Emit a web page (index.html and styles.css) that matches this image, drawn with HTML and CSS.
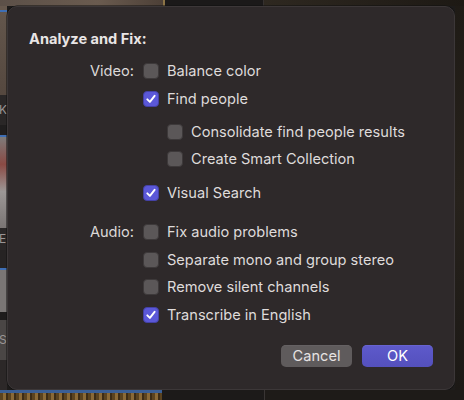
FILE: index.html
```html
<!DOCTYPE html>
<html>
<head>
<meta charset="utf-8">
<link rel="stylesheet" href="styles.css">
</head>
<body>
<div class="screen">
  <div class="top-strip">
    <div class="ts-image"></div>
    <div class="ts-gold"></div>
    <div class="ts-dark"></div>
    <div class="ts-line"></div>
    <div class="ts-brown"></div>
  </div>
  <div class="left-strip">
    <div class="ls a"></div>
    <div class="ls blue"></div>
    <div class="ls b"></div>
    <div class="ls bar"><span>K</span></div>
    <div class="ls c"></div>
    <div class="ls blue"></div>
    <div class="ls d"></div>
    <div class="ls bar2"><span>E</span></div>
    <div class="ls e"></div>
    <div class="ls blue"></div>
    <div class="ls f"></div>
    <div class="ls g"></div>
    <div class="ls h"><span>S</span></div>
    <div class="ls i"></div>
  </div>
  <div class="dialog">
    <div class="title">Analyze and Fix:</div>
    <div class="row r-video">
      <span class="label">Video:</span>
      <span class="box"></span><span class="text">Balance color</span>
    </div>
    <div class="row r-find">
      <span class="label"></span>
      <span class="box on"><svg viewBox="0 0 16 16"><path d="M4.3 8.3 L6.9 10.9 L11.6 4.8"/></svg></span><span class="text">Find people</span>
    </div>
    <div class="row r-cons">
      <span class="label"></span>
      <span class="indent"></span>
      <span class="box"></span><span class="text">Consolidate find people results</span>
    </div>
    <div class="row r-smart">
      <span class="label"></span>
      <span class="indent"></span>
      <span class="box"></span><span class="text">Create Smart Collection</span>
    </div>
    <div class="row r-visual">
      <span class="label"></span>
      <span class="box on"><svg viewBox="0 0 16 16"><path d="M4.3 8.3 L6.9 10.9 L11.6 4.8"/></svg></span><span class="text">Visual Search</span>
    </div>
    <div class="row r-audio">
      <span class="label">Audio:</span>
      <span class="box"></span><span class="text">Fix audio problems</span>
    </div>
    <div class="row r-sep">
      <span class="label"></span>
      <span class="box"></span><span class="text">Separate mono and group stereo</span>
    </div>
    <div class="row r-rem">
      <span class="label"></span>
      <span class="box"></span><span class="text">Remove silent channels</span>
    </div>
    <div class="row r-trans">
      <span class="label"></span>
      <span class="box on"><svg viewBox="0 0 16 16"><path d="M4.3 8.3 L6.9 10.9 L11.6 4.8"/></svg></span><span class="text">Transcribe in English</span>
    </div>
    <div class="buttons">
      <button class="btn cancel">Cancel</button>
      <button class="btn ok">OK</button>
    </div>
  </div>
  <div class="right-strip"></div>
  <div class="bottom-strip">
    <div class="bs-left"><div class="bs-blue"></div><div class="bs-gold"></div></div>
    <div class="bs-dark"></div>
    <div class="bs-line"></div>
    <div class="bs-dark2"></div>
  </div>
</div>
</body>
</html>
```

FILE: styles.css
```css
* { box-sizing: border-box; }
html, body { margin: 0; padding: 0; background: #1d1b1a; }
body { font-family: Inter, "Noto Sans", "Liberation Sans", sans-serif; }

.screen {
  width: 464px;
  height: 400px;
  display: grid;
  grid-template-columns: 7px 448px 9px;
  grid-template-rows: 6px 384px 10px;
  overflow: hidden;
}

.top-strip { grid-column: 1 / 4; display: flex; }
.ts-image { width: 163px; background: linear-gradient(90deg, #5c5048, #6a5b4f 60%, #4d4037); }
.ts-gold { width: 2px; background: #8c7446; }
.ts-dark { width: 98px; background: #1b1919; }
.ts-line { width: 1px; background: #353130; }
.ts-brown { flex: 1; background: linear-gradient(90deg, #2e2820, #241f19 60%, #1d1914); }

.left-strip { display: flex; flex-direction: column; background: #3a3432; }
.ls.a { height: 4px; background: #66584d; }
.ls.blue { height: 2px; background: #3f6fb5; }
.ls.b { height: 83px; background: linear-gradient(180deg, #63564c, #55483f); }
.ls.bar, .ls.bar2, .ls.h { background: #2a2727; color: #9a9595; font-size: 12px; line-height: 14px; overflow: hidden; display: flex; align-items: center; }
.ls.bar span, .ls.bar2 span, .ls.h span { margin-left: -1px; }
.ls.bar { height: 30px; }
.ls.c { height: 10px; background: #201e1e; }
.ls.d { height: 91px; background: linear-gradient(180deg, #7e7b7a, #8a4a44 30%, #9c9796 60%, #7a7574); }
.ls.bar2 { height: 22px; }
.ls.e { height: 18px; background: #262323; }
.ls.f { height: 42px; background: #7a7675; }
.ls.g { height: 8px; background: #1e1c1c; }
.ls.h { height: 40px; background: #4a4645; }
.ls.i { flex: 1; background: #2c2828; }

.right-strip { background: linear-gradient(180deg, #1f1b16, #27221c 50%, #1c1916); }

.bottom-strip { grid-column: 1 / 4; display: flex; }
.bs-left { width: 162px; display: flex; flex-direction: column; }
.bs-blue { height: 3px; background: #3a5f96; }
.bs-gold { flex: 1; background: repeating-linear-gradient(90deg, #5a4320 0 3px, #8a6a38 3px 6px, #3c2c16 6px 8px); }
.bs-dark { width: 102px; background: #1c1a19; }
.bs-line { width: 1px; background: #393534; }
.bs-dark2 { flex: 1; background: #1e1b18; }

.dialog {
  background: #2e292a;
  border: 1px solid #3c3738;
  border-radius: 10px;
  box-shadow: 0 0 0 0.5px #111;
  padding: 24px 21px 0 21px;
  display: flex;
  flex-direction: column;
  color: #dfdbdb;
  font-size: 14.6px;
  line-height: 16px;
}

.title { font-weight: 700; color: #e9e5e5; }

.row { display: flex; align-items: center; height: 16px; }
.label { width: 105px; margin-right: 9px; text-align: right; color: #dcd8d8; }
.indent { width: 24px; }
.text { margin-left: 8px; }

.box {
  width: 16px;
  height: 16px;
  border-radius: 4px;
  background: #5b5758;
  border: 1px solid #3d393a;
  display: flex;
  align-items: center;
  justify-content: center;
  flex: none;
}
.box.on { background: #5b58d8; border-color: #4441a6; }
.box svg { width: 16px; height: 16px; display: block; flex: none; }
.box svg path { fill: none; stroke: #fff; stroke-width: 1.9; stroke-linecap: round; stroke-linejoin: round; }

.r-video { margin-top: 16px; }
.r-find { margin-top: 12px; }
.r-cons { margin-top: 17px; }
.r-smart { margin-top: 11px; }
.r-visual { margin-top: 18px; }
.r-audio { margin-top: 23px; }
.r-sep { margin-top: 12px; }
.r-rem { margin-top: 11px; }
.r-trans { margin-top: 12px; }

.buttons { display: flex; justify-content: flex-end; gap: 10px; margin-top: 22px; }
.btn {
  font-family: inherit;
  font-size: 14.6px;
  height: 22px;
  width: 71px;
  border: none;
  border-radius: 5px;
  padding: 0;
  color: #e6e2e2;
}
.btn.cancel { background: #5f5b5c; box-shadow: inset 0 0.5px 0 #6d696a; }
.btn.ok { background: linear-gradient(180deg, #5e5acb, #5450bd); color: #fff; box-shadow: inset 0 0.5px 0 #706cd8; }
```
